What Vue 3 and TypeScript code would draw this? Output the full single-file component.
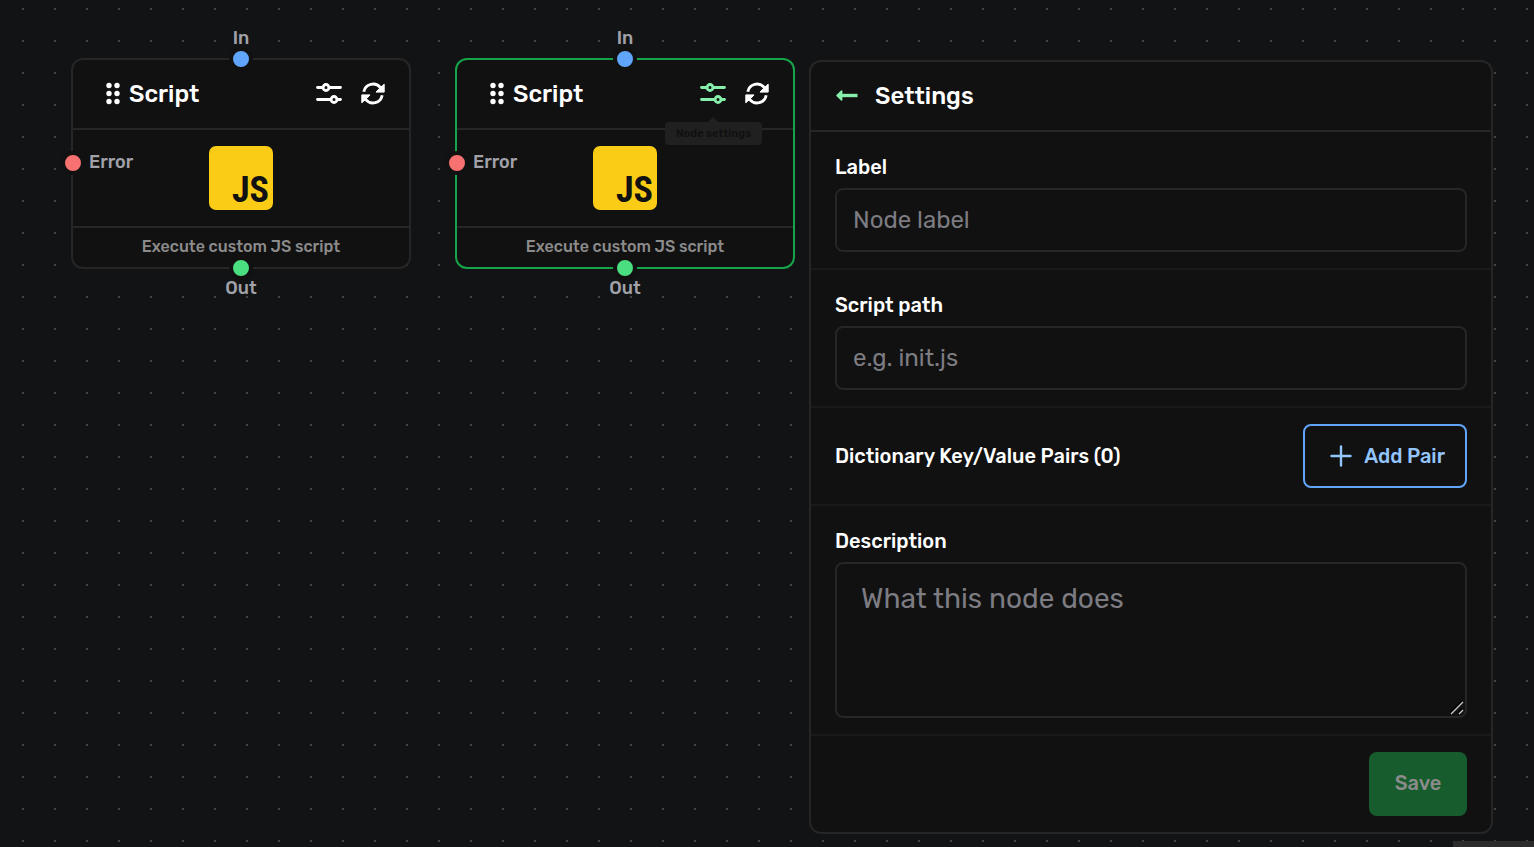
<script setup lang="ts">
import { ref } from 'vue'

interface ScriptNode {
  id: number
  selected: boolean
}

const nodes: ScriptNode[] = [
  { id: 1, selected: false },
  { id: 2, selected: true },
]

const label = ref('')
const scriptPath = ref('')
const description = ref('')
const pairs = ref<{ key: string; value: string }[]>([])

function addPair(): void {
  pairs.value.push({ key: '', value: '' })
}
</script>

<template>
  <main class="canvas">
    <article v-for="node in nodes" :key="node.id" class="node" :class="{ selected: node.selected }">
      <header class="node-head">
        <svg class="grip" viewBox="0 0 14 24" aria-hidden="true">
          <circle v-for="i in 6" :key="i" :cx="i % 2 ? 3 : 11" :cy="3.5 + 8 * Math.floor((i - 1) / 2)" r="2.7" />
        </svg>
        <h2>Script</h2>
        <div class="tool">
          <button type="button" class="icon-btn settings-btn" aria-label="Node settings">
            <svg viewBox="0 0 28 28" fill="none" stroke="currentColor" stroke-width="2.8" stroke-linecap="round" aria-hidden="true">
              <path d="M2.5 7.5H8M14 7.5H25.5M2.5 19.5H16M22 19.5H25.5" />
              <circle cx="11" cy="7.5" r="3" />
              <circle cx="19" cy="19.5" r="3" />
            </svg>
          </button>
          <span v-if="node.selected" class="tip" role="tooltip">Node settings</span>
        </div>
        <button type="button" class="icon-btn" aria-label="Refresh">
          <svg viewBox="0 0 28 28" aria-hidden="true">
            <path d="M4.8 11.8A9.4 9.4 0 0 1 21.4 7.6M23.2 15.2A9.4 9.4 0 0 1 6.6 19.4" fill="none" stroke="currentColor" stroke-width="2.8" />
            <path d="M25.2 4.2V12.1H17L20 8.8ZM2.8 22.8V14.9H11L8 18.2Z" fill="currentColor" stroke="currentColor" stroke-linejoin="round" />
          </svg>
        </button>
      </header>
      <div class="node-body"><span class="js-logo">JS</span></div>
      <footer class="node-foot">Execute custom JS script</footer>
      <span class="port port-in"></span>
      <span class="port-label label-in">In</span>
      <span class="port port-error"></span>
      <span class="port-label label-error">Error</span>
      <span class="port port-out"></span>
      <span class="port-label label-out">Out</span>
    </article>

    <form class="panel" @submit.prevent>
      <header class="panel-head">
        <button type="button" class="back" aria-label="Back">
          <svg viewBox="0 0 24 24" aria-hidden="true">
            <path d="M6 11.5H22.5" fill="none" stroke="currentColor" stroke-width="3.4" />
            <path d="M2 11.5L6.6 7V16Z" fill="currentColor" stroke="currentColor" stroke-width="1.6" stroke-linejoin="round" />
          </svg>
        </button>
        <h2>Settings</h2>
      </header>
      <section class="field">
        <label for="node-label">Label</label>
        <input id="node-label" v-model="label" type="text" placeholder="Node label" />
      </section>
      <section class="field">
        <label for="script-path">Script path</label>
        <input id="script-path" v-model="scriptPath" type="text" placeholder="e.g. init.js" />
      </section>
      <section class="row">
        <h3>Dictionary Key/Value Pairs ({{ pairs.length }})</h3>
        <button type="button" class="add" @click="addPair">
          <svg viewBox="0 0 24 24" fill="none" stroke="currentColor" stroke-width="2.4" stroke-linecap="round" aria-hidden="true">
            <path d="M12 2.5V21.5M2.5 12H21.5" />
          </svg>
          Add Pair
        </button>
      </section>
      <section class="field">
        <label for="description">Description</label>
        <div class="area">
          <textarea id="description" v-model="description" placeholder="What this node does"></textarea>
          <svg class="resizer" viewBox="0 0 14 14" fill="none" aria-hidden="true">
            <path d="M0 12L12 0M8 12L12 8" stroke="#000" stroke-width="2" />
            <path d="M1 13L13 1M9 13L13 9" stroke="#c8c8c8" stroke-width="1.4" />
          </svg>
        </div>
      </section>
      <footer class="actions"><button type="submit" class="save" disabled>Save</button></footer>
    </form>
    <div class="minimap"></div>
  </main>
</template>

<style>
body {
  background: #121315;
}
</style>

<style scoped>
* {
  box-sizing: border-box;
}
.canvas {
  position: relative;
  display: flex;
  align-items: flex-start;
  min-height: 100vh;
  padding: 58px 41px 13px 71px;
  overflow: hidden;
  color: #fff;
  font-family: Rubik, Roboto, sans-serif;
  font-weight: 500;
  background: radial-gradient(circle at 1px 1px, #45464a 1px, transparent 1px) 22px 8px / 32px 32px #121315;
}
h2,
h3 {
  margin: 0;
  font-weight: 500;
}
h2 {
  font-size: 24px;
  line-height: 32px;
}
button {
  padding: 0;
  border: 0;
  background: none;
  font: inherit;
  color: inherit;
}
svg {
  display: block;
}
.node {
  position: relative;
  flex: none;
  width: 340px;
  margin-right: 44px;
  border: 2px solid #262626;
  border-radius: 12px;
  background: #111;
}
.node.selected {
  margin-right: 14px;
  border-color: #16a34a;
}
.node-head {
  display: flex;
  align-items: center;
  height: 70px;
  padding: 0 22px 0 33px;
  border-bottom: 2px solid #262626;
}
.grip {
  width: 14px;
  height: 24px;
  margin-right: 9px;
  fill: #fff;
}
.tool {
  position: relative;
  margin-left: auto;
  margin-right: 16px;
}
.icon-btn {
  display: block;
  width: 28px;
  height: 28px;
}
.selected .settings-btn {
  color: #86efac;
}
.tip {
  position: absolute;
  top: 42px;
  left: 50%;
  width: 97px;
  margin-left: -48px;
  border-radius: 4px;
  background: #202020;
  color: #101010;
  font-size: 11px;
  font-weight: 600;
  line-height: 23px;
  text-align: center;
}
.tip::before {
  content: '';
  position: absolute;
  top: -5px;
  left: 43px;
  border: 5px solid transparent;
  border-top: 0;
  border-bottom-color: #202020;
}
.node-body {
  display: flex;
  justify-content: center;
  padding: 16px;
}
.js-logo {
  width: 64px;
  height: 64px;
  padding: 25px 4px 0 0;
  border-radius: 7px;
  background: #facc15;
  color: #111;
  font-family: 'Liberation Sans Narrow', 'Roboto Condensed', Roboto, sans-serif;
  font-size: 36px;
  font-weight: 700;
  line-height: 38px;
  text-align: right;
}
.node-foot {
  border-top: 2px solid #262626;
  color: #8b8b8b;
  font-size: 16px;
  line-height: 37px;
  padding-bottom: 2px;
  text-align: center;
}
.port {
  position: absolute;
  width: 24px;
  height: 24px;
  border: 4px solid #111;
  border-radius: 50%;
}
.port-in {
  top: -13px;
  left: 156px;
  background: #60a5fa;
}
.port-error {
  top: 91px;
  left: -12px;
  background: #f87171;
}
.port-out {
  bottom: -13px;
  left: 156px;
  background: #4ade80;
}
.port-label {
  position: absolute;
  color: #a1a1aa;
  font-size: 18px;
  line-height: 20px;
}
.label-in,
.label-out {
  left: 0;
  right: 0;
  text-align: center;
}
.label-in {
  top: -32px;
}
.label-error {
  top: 92px;
  left: 16px;
}
.label-out {
  bottom: -31px;
}
.panel {
  flex: 1;
  min-width: 0;
  margin-top: 2px;
  border: 2px solid #262626;
  border-radius: 12px;
  background: #111;
}
.panel-head {
  display: flex;
  align-items: center;
  height: 70px;
  padding: 0 24px;
  border-bottom: 2px solid #262626;
}
.back {
  margin-right: 16px;
  color: #86efac;
}
.back svg,
.add svg {
  width: 24px;
  height: 24px;
}
.field,
.row {
  padding: 16px 24px;
  border-bottom: 2px solid #1a1a1a;
}
label,
h3 {
  display: block;
  font-size: 20px;
  line-height: 32px;
}
.field label {
  padding-top: 3px;
  margin-bottom: 5px;
}
input,
textarea {
  display: block;
  width: 100%;
  height: 64px;
  border: 2px solid #262626;
  border-radius: 8px;
  outline: 0;
  background: transparent;
  color: #fff;
  font-family: inherit;
  font-size: 24px;
  font-weight: 400;
  padding: 0 16px;
}
textarea {
  height: 156px;
  padding: 15px 24px;
  font-size: 28px;
  line-height: 40px;
  resize: vertical;
}
textarea::-webkit-resizer {
  background: transparent;
}
.area {
  position: relative;
}
.resizer {
  position: absolute;
  right: 3px;
  bottom: 3px;
  width: 14px;
  height: 14px;
  pointer-events: none;
}
::placeholder {
  color: #7c7c82;
  opacity: 1;
}
.row {
  display: flex;
  align-items: center;
  justify-content: space-between;
}
.add {
  display: flex;
  align-items: center;
  gap: 11px;
  height: 64px;
  padding: 0 20px 0 24px;
  border: 2px solid #60a5fa;
  border-radius: 8px;
  color: #93c5fd;
  font-size: 20px;
  line-height: 24px;
}
.actions {
  display: flex;
  justify-content: flex-end;
  padding: 16px 24px;
}
.save {
  width: 98px;
  height: 64px;
  padding-bottom: 2px;
  border-radius: 8px;
  background: #165c2d;
  color: #8b8b8b;
  font-size: 20px;
}
.minimap {
  position: absolute;
  right: 0;
  bottom: 0;
  width: 81px;
  height: 6px;
  background: #2b2b2b;
}
</style>
